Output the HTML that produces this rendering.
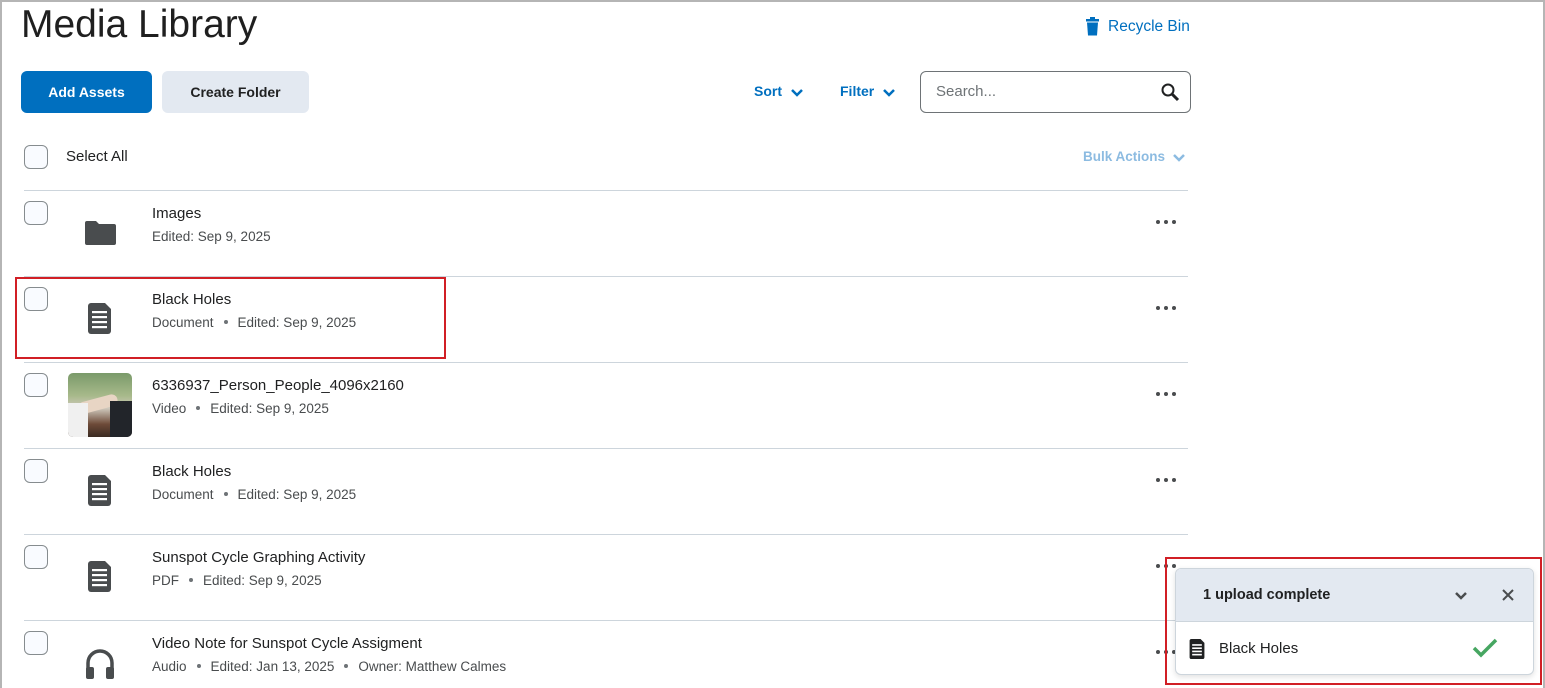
<!DOCTYPE html>
<html><head><style>
*{box-sizing:border-box;margin:0;padding:0}
body{width:1545px;height:688px;overflow:hidden;background:#fff;font-family:"Liberation Sans",sans-serif;color:#202122;position:relative}
.frame{position:absolute;left:0;top:0;width:1545px;height:688px;border:2px solid #b5b5b5;border-bottom:none}
.abs{position:absolute}
h1{position:absolute;left:21px;top:3px;font-size:39px;font-weight:400;color:#1f1f1f}
.btn{position:absolute;top:71px;height:42px;border-radius:6px;font-size:14px;font-weight:700;display:flex;align-items:center;justify-content:center;padding-top:0}
.cb{position:absolute;left:24px;width:24px;height:24px;border:1.5px solid #868c8f;border-radius:6px;background:#f9fbff}
.line{position:absolute;left:24px;width:1164px;height:1px;background:#cdd5dc}
.title{position:absolute;left:152px;font-size:15px;color:#202122}
.meta{position:absolute;left:152px;font-size:13.5px;color:#494c4e}
.dot{display:inline-block;width:4px;height:4px;border-radius:50%;background:#6e7376;margin:0 10px 2px 10px;vertical-align:middle}
.more{position:absolute;left:1156px;width:22px;height:4px}
.more i{position:absolute;top:0;width:4px;height:4px;border-radius:50%;background:#494c4e}
</style></head><body>
<div class="frame"></div>
<h1>Media Library</h1>
<svg class="abs" style="left:1086px;top:17px" width="13" height="19" viewBox="0 0 13 19"><rect x="0" y="2" width="13" height="2.5" fill="#006fbf"/><rect x="4" y="0" width="5" height="3" fill="#006fbf"/><path d="M1 5.5h11l-1 13H2z" fill="#006fbf"/></svg>
<div class="abs" style="left:1108px;top:18px;font-size:15.5px;color:#006fbf">Recycle Bin</div>
<div class="btn" style="left:21px;width:131px;background:#006fbf;color:#fff">Add Assets</div>
<div class="btn" style="left:162px;width:147px;background:#e3e9f1;color:#202122">Create Folder</div>
<div class="abs" style="left:754px;top:83px;font-size:14px;font-weight:700;color:#006fbf">Sort</div>
<svg class="abs" style="left:790px;top:88px" width="14" height="9"><path d="M2 2l5 5 5-5" stroke="#006fbf" stroke-width="2.5" fill="none"/></svg>
<div class="abs" style="left:840px;top:83px;font-size:14px;font-weight:700;color:#006fbf">Filter</div>
<svg class="abs" style="left:882px;top:88px" width="14" height="9"><path d="M2 2l5 5 5-5" stroke="#006fbf" stroke-width="2.5" fill="none"/></svg>
<div class="abs" style="left:920px;top:71px;width:271px;height:42px;border:1px solid #6e7376;border-radius:6px"></div>
<div class="abs" style="left:936px;top:83px;font-size:15px;color:#6e7376">Search...</div>
<svg class="abs" style="left:1160px;top:82px" width="20" height="20"><circle cx="8" cy="8" r="5.5" stroke="#202122" stroke-width="2" fill="none"/><path d="M12 12l6 6" stroke="#202122" stroke-width="3"/></svg>
<div class="cb" style="top:145px"></div>
<div class="abs" style="left:66px;top:148px;font-size:15px">Select All</div>
<div class="abs" style="left:1083px;top:149px;font-size:13.5px;font-weight:700;color:#8cbbe1">Bulk Actions</div>
<svg class="abs" style="left:1172px;top:153px" width="14" height="9"><path d="M2 2l5 5 5-5" stroke="#8cbbe1" stroke-width="2.5" fill="none"/></svg>

<div class="line" style="top:190px"></div>
<div class="line" style="top:276px"></div>
<div class="line" style="top:362px"></div>
<div class="line" style="top:448px"></div>
<div class="line" style="top:534px"></div>
<div class="line" style="top:620px"></div>

<svg width="0" height="0" style="position:absolute"><defs><g id="doc"><path d="M3 0h14l6 6v22a3 3 0 0 1-3 3H3a3 3 0 0 1-3-3V3a3 3 0 0 1 3-3z" fill="#494c4e"/><rect x="4" y="8" width="15" height="2.2" fill="#fff"/><rect x="4" y="13" width="15" height="2.2" fill="#fff"/><rect x="4" y="18" width="15" height="2.2" fill="#fff"/><rect x="4" y="23" width="15" height="2.2" fill="#fff"/></g></defs></svg>

<!-- row1 -->
<div class="cb" style="top:201px"></div>
<svg class="abs" style="left:85px;top:221px" width="31" height="24"><path d="M0 2a2 2 0 0 1 2-2h9l3 3h15a2 2 0 0 1 2 2v17a2 2 0 0 1-2 2H2a2 2 0 0 1-2-2z" fill="#494c4e"/></svg>
<div class="title" style="top:205px">Images</div>
<div class="meta" style="top:229px">Edited: Sep 9, 2025</div>
<div class="more" style="top:220px"><i style="left:0"></i><i style="left:8px"></i><i style="left:16px"></i></div>

<!-- row2 -->
<div class="cb" style="top:287px"></div>
<svg class="abs" style="left:88px;top:303px" width="24" height="31"><use href="#doc"/></svg>
<div class="title" style="top:291px">Black Holes</div>
<div class="meta" style="top:315px">Document<span class="dot"></span>Edited: Sep 9, 2025</div>
<div class="more" style="top:306px"><i style="left:0"></i><i style="left:8px"></i><i style="left:16px"></i></div>
<div class="abs" style="left:15px;top:277px;width:431px;height:82px;border:2px solid #d11f25"></div>

<!-- row3 -->
<div class="cb" style="top:373px"></div>
<div class="abs" style="left:68px;top:373px;width:64px;height:64px;border-radius:5px;overflow:hidden;background:linear-gradient(180deg,#7a9a6a 0%,#a7b98a 35%,#cfc9bd 55%,#6d4a38 80%,#3a2a22 100%)"><div style="position:absolute;left:10px;top:25px;width:40px;height:12px;background:#e8d5c4;border-radius:6px;transform:rotate(-15deg)"></div><div style="position:absolute;left:0;top:30px;width:20px;height:34px;background:#f0f0f0"></div><div style="position:absolute;right:0;top:28px;width:22px;height:36px;background:#22252a"></div></div>
<div class="title" style="top:377px">6336937_Person_People_4096x2160</div>
<div class="meta" style="top:401px">Video<span class="dot"></span>Edited: Sep 9, 2025</div>
<div class="more" style="top:392px"><i style="left:0"></i><i style="left:8px"></i><i style="left:16px"></i></div>

<!-- row4 -->
<div class="cb" style="top:459px"></div>
<svg class="abs" style="left:88px;top:475px" width="24" height="31"><use href="#doc"/></svg>
<div class="title" style="top:463px">Black Holes</div>
<div class="meta" style="top:487px">Document<span class="dot"></span>Edited: Sep 9, 2025</div>
<div class="more" style="top:478px"><i style="left:0"></i><i style="left:8px"></i><i style="left:16px"></i></div>

<!-- row5 -->
<div class="cb" style="top:545px"></div>
<svg class="abs" style="left:88px;top:561px" width="24" height="31"><use href="#doc"/></svg>
<div class="title" style="top:549px">Sunspot Cycle Graphing Activity</div>
<div class="meta" style="top:573px">PDF<span class="dot"></span>Edited: Sep 9, 2025</div>
<div class="more" style="top:564px"><i style="left:0"></i><i style="left:8px"></i><i style="left:16px"></i></div>

<!-- row6 -->
<div class="cb" style="top:631px"></div>
<svg class="abs" style="left:84px;top:647px" width="32" height="32"><path d="M4 22v-6a12 12 0 0 1 24 0v6" stroke="#494c4e" stroke-width="3.5" fill="none"/><rect x="2" y="20" width="8" height="12" rx="2" fill="#494c4e"/><rect x="22" y="20" width="8" height="12" rx="2" fill="#494c4e"/></svg>
<div class="title" style="top:635px">Video Note for Sunspot Cycle Assigment</div>
<div class="meta" style="top:659px">Audio<span class="dot"></span>Edited: Jan 13, 2025<span class="dot"></span>Owner: Matthew Calmes</div>
<div class="more" style="top:650px"><i style="left:0"></i><i style="left:8px"></i><i style="left:16px"></i></div>

<!-- toast -->
<div class="abs" style="left:1175px;top:568px;width:359px;height:107px;border:1px solid #cdd5dc;border-radius:6px;background:#fff;overflow:hidden;box-shadow:0 2px 6px rgba(0,0,0,.12)">
 <div style="height:53px;background:#e3e9f1;border-bottom:1px solid #cdd5dc"></div>
</div>
<div class="abs" style="left:1203px;top:587px;font-size:14.5px;font-weight:700;color:#202122">1 upload complete</div>
<svg class="abs" style="left:1454px;top:591px" width="14" height="9"><path d="M2 2l5 5 5-5" stroke="#494c4e" stroke-width="2.5" fill="none"/></svg>
<svg class="abs" style="left:1501px;top:588px" width="14" height="14"><path d="M2 2l10 10M12 2L2 12" stroke="#494c4e" stroke-width="2"/></svg>
<svg class="abs" style="left:1189px;top:639px" width="16" height="20" viewBox="0 0 23 31"><path d="M3 0h14l6 6v22a3 3 0 0 1-3 3H3a3 3 0 0 1-3-3V3a3 3 0 0 1 3-3z" fill="#202122"/><rect x="4" y="8" width="15" height="2.5" fill="#fff"/><rect x="4" y="13" width="15" height="2.5" fill="#fff"/><rect x="4" y="18" width="15" height="2.5" fill="#fff"/><rect x="4" y="23" width="15" height="2.5" fill="#fff"/></svg>
<div class="abs" style="left:1219px;top:640px;font-size:15px;color:#202122">Black Holes</div>
<svg class="abs" style="left:1472px;top:638px" width="26" height="20"><path d="M2 10l7 7L24 2" stroke="#46a661" stroke-width="3.5" fill="none"/></svg>
<div class="abs" style="left:1165px;top:557px;width:377px;height:128px;border:2px solid #d11f25"></div>
</body></html>
